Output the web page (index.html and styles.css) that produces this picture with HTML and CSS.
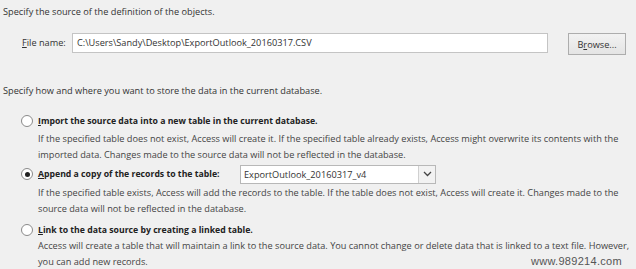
FILE: index.html
```html
<!DOCTYPE html>
<html lang="en">
<head>
  <meta charset="UTF-8">
  <title>Get External Data - Text File</title>
  <link rel="stylesheet" href="styles.css">
</head>
<body>
  <div class="dialog">
    <p class="intro">Specify the source of the definition of the objects.</p>

    <!-- File name row -->
    <div class="file-row">
      <label class="file-label" for="fileName"><u>F</u>ile name:</label>
      <div class="file-box" id="fileName">C:\Users\Sandy\Desktop\ExportOutlook_20160317.CSV</div>
      <button class="browse">B<u>r</u>owse...</button>
    </div>

    <p class="intro second">Specify how and where you want to store the data in the current database.</p>

    <!-- Option: import -->
    <div class="option option-import">
      <div class="option-head">
        <span class="radio"></span>
        <span class="option-title"><u>I</u>mport the source data into a new table in the current database.</span>
      </div>
      <p class="option-desc">If the specified table does not exist, Access will create it. If the specified table already exists, Access might overwrite its contents with the imported data. Changes made to the source data will not be reflected in the database.</p>
    </div>

    <!-- Option: append -->
    <div class="option option-append">
      <div class="option-head tall">
        <span class="radio checked"></span>
        <span class="option-title fixed"><u>A</u>ppend a copy of the records to the table:</span>
        <div class="combo">
          <span class="combo-text">ExportOutlook_20160317_v4</span>
          <span class="combo-arrow">
            <svg width="9" height="6" viewBox="0 0 9 6"><path d="M1 1 L4.5 4.5 L8 1" fill="none" stroke="#444" stroke-width="1.3"/></svg>
          </span>
        </div>
      </div>
      <p class="option-desc">If the specified table exists, Access will add the records to the table. If the table does not exist, Access will create it. Changes made to the source data will not be reflected in the database.</p>
    </div>

    <!-- Option: link -->
    <div class="option option-link">
      <div class="option-head">
        <span class="radio"></span>
        <span class="option-title"><u>L</u>ink to the data source by creating a linked table.</span>
      </div>
      <p class="option-desc">Access will create a table that will maintain a link to the source data. You cannot change or delete data that is linked to a text file. However, you can add new records.</p>
    </div>

    <div class="watermark">www.989214.com</div>
  </div>
</body>
</html>
```

FILE: styles.css
```css
body {
  margin: 0;
  background-color: #f0f0f0;
  font-family: "Open Sans", "Noto Sans", sans-serif;
  font-size: 9.2px;
  color: #333;
}
.dialog {
  position: relative;
  width: 636px;
  height: 269px;
  padding: 5px 0 0 3px;
  box-sizing: border-box;
  overflow: hidden;
}
u {
  text-decoration: underline;
  text-underline-offset: 1px;
}
.intro {
  margin: 0;
  line-height: 14px;
}
.intro.second {
  margin-top: 29px;
}
.file-row {
  display: flex;
  align-items: flex-start;
  margin-top: 14px;
  padding-left: 19px;
}
.file-label {
  width: 50px;
  line-height: 20px;
}
.file-box {
  width: 470px;
  height: 18px;
  line-height: 18px;
  padding-left: 4px;
  background: #fff;
  border: 1px solid #c4c4c4;
}
.browse {
  margin-left: 20px;
  width: 58px;
  height: 22px;
  padding: 0;
  font-family: inherit;
  font-size: inherit;
  color: #333;
  background: linear-gradient(#f2f2f2, #e4e4e4);
  border: 1px solid #adadad;
  border-radius: 0;
}
.option {
  margin-left: 18px;
}
.option-import {
  margin-top: 14px;
}
.option-append {
  margin-top: 1px;
}
.option-link {
  margin-top: 4px;
}
.option-head {
  display: flex;
  align-items: center;
  height: 18px;
}
.option-head.tall {
  height: 20px;
}
.radio {
  flex: none;
  width: 12px;
  height: 12px;
  border: 1px solid #8a8a8a;
  border-radius: 50%;
  background: #fff;
  box-sizing: border-box;
  margin-right: 5px;
  position: relative;
}
.radio.checked::after {
  content: "";
  position: absolute;
  left: 2.5px;
  top: 2.5px;
  width: 5px;
  height: 5px;
  border-radius: 50%;
  background: #222;
}
.option-title {
  font-size: 8.7px;
  font-weight: bold;
  color: #222;
}
.option-title.fixed {
  width: 192px;
}
.option-desc {
  margin: 1px 0 0 17px;
  line-height: 16px;
  color: #444;
  width: 598px;
}
.option-link .option-desc {
  margin-top: -1px;
}
.combo {
  display: flex;
  align-items: center;
  margin-left: 10px;
  width: 196px;
  height: 19px;
  background: #fff;
  border: 1px solid #b8b8b8;
  box-sizing: border-box;
}
.combo-text {
  flex: 1;
  padding-left: 3px;
}
.combo-arrow {
  width: 16px;
  height: 17px;
  display: flex;
  align-items: center;
  justify-content: center;
  border-left: 1px solid #d0d0d0;
  background: #f2f2f2;
}
.watermark {
  position: absolute;
  right: 14px;
  top: 256px;
  font-family: "Liberation Sans", Arial, sans-serif;
  font-size: 11px;
  line-height: 11px;
  color: #555;
  letter-spacing: 0.3px;
}
```
